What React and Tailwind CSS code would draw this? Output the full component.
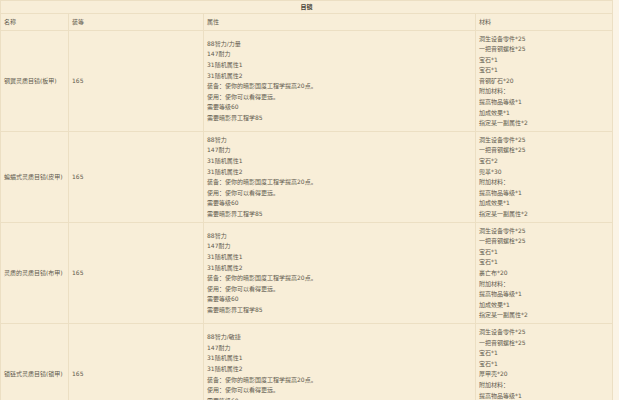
const attrs = (main) => [
  main,
  "147耐力",
  "31随机属性1",
  "31随机属性2",
  "装备：使你的暗影国度工程学提高20点。",
  "使用：使你可以看得更远。",
  "需要等级60",
  "需要暗影界工程学85",
];

const extra = ["附加材料：", "提高物品等级*1", "加成效果*1", "指定某一副属性*2"];
const base = ["洞生设备零件*25", "一把音钢螺栓*25"];

const rows = [
  {
    name: "钢翼灵质目镜(板甲)",
    level: 165,
    attrs: attrs("88智力/力量"),
    mats: [...base, "宝石*1", "宝石*1", "音钢矿石*20", ...extra],
  },
  {
    name: "蝙蝠式灵质目镜(皮甲)",
    level: 165,
    attrs: attrs("88智力"),
    mats: [...base, "宝石*2", "兜革*30", ...extra],
  },
  {
    name: "灵质的灵质目镜(布甲)",
    level: 165,
    attrs: attrs("88智力"),
    mats: [...base, "宝石*1", "宝石*1", "裹亡布*20", ...extra],
  },
  {
    name: "锁链式灵质目镜(锁甲)",
    level: 165,
    attrs: attrs("88智力/敏捷"),
    mats: [...base, "宝石*1", "宝石*1", "厚甲壳*20", ...extra],
  },
];

function Lines({ items }) {
  return (
    <div className="flex flex-col">
      {items.map((t, i) => (
        <div key={i} className="h-[10.6px] whitespace-nowrap">
          {t}
        </div>
      ))}
    </div>
  );
}

export default function App() {
  return (
    <div
      className="h-[400px] w-[619px] overflow-hidden bg-[#fbf4e6] text-[6px] leading-[10.6px] text-[#615a4e]"
      style={{ fontFamily: '"DejaVu Sans", "Noto Sans CJK SC", sans-serif' }}
    >
      <table className="w-[612px] table-fixed border-collapse bg-[#f8eed8]">
        <colgroup>
          <col className="w-[68px]" />
          <col className="w-[135px]" />
          <col className="w-[272px]" />
          <col className="w-[137px]" />
        </colgroup>
        <thead>
          <tr className="h-[13px]">
            <th
              colSpan={4}
              className="border border-[#ecdfc3] text-center font-bold text-[#4a4439]"
            >
              目镜
            </th>
          </tr>
          <tr className="h-[17px]">
            {["名称", "装等", "属性", "材料"].map((h) => (
              <th
                key={h}
                className="border border-[#ecdfc3] px-[3px] text-left font-normal"
              >
                {h}
              </th>
            ))}
          </tr>
        </thead>
        <tbody>
          {rows.map((r) => (
            <tr key={r.name}>
              <td className="border border-[#ecdfc3] px-[3px] align-middle whitespace-nowrap">
                {r.name}
              </td>
              <td className="border border-[#ecdfc3] px-[3px] align-middle">
                {r.level}
              </td>
              <td className="border border-[#ecdfc3] px-[3px] py-[2.5px] align-middle">
                <Lines items={r.attrs} />
              </td>
              <td className="border border-[#ecdfc3] px-[3px] py-[2.5px] align-middle">
                <Lines items={r.mats} />
              </td>
            </tr>
          ))}
        </tbody>
      </table>
    </div>
  );
}
